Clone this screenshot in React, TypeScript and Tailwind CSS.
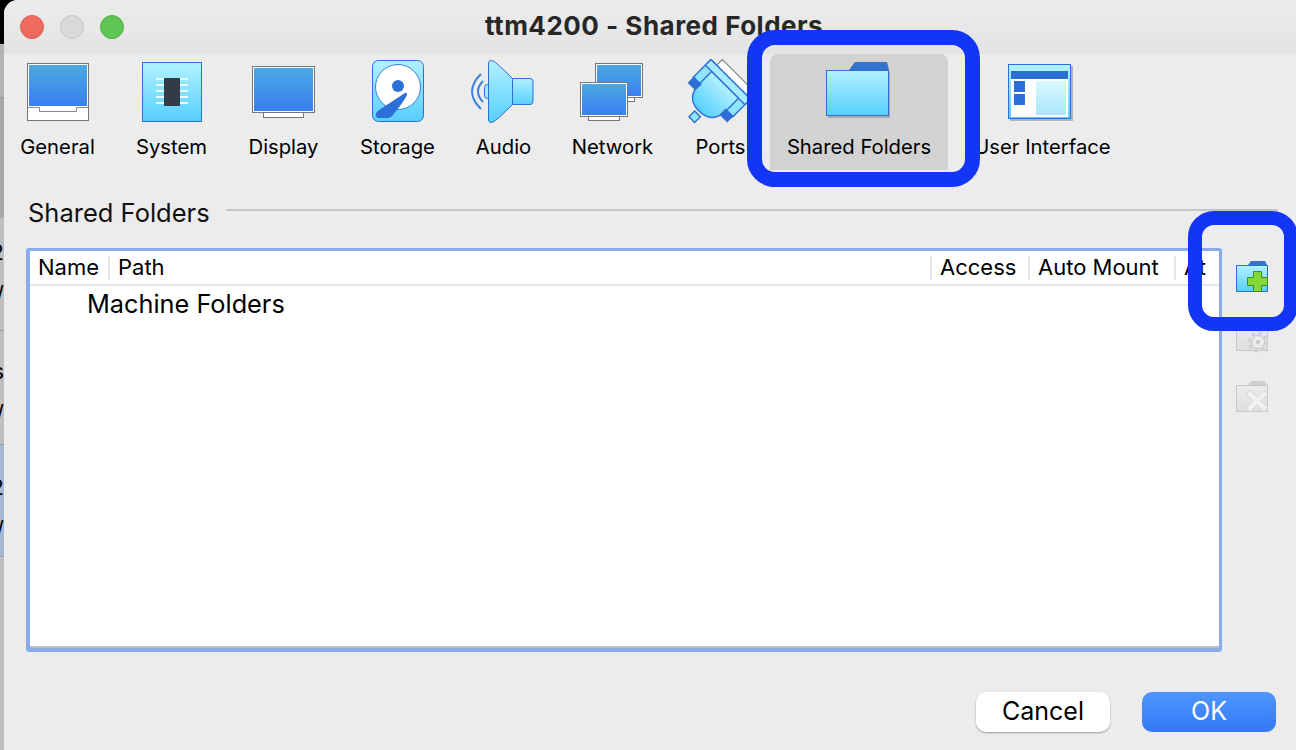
const ink = "#2d6fd6";

function Gradients() {
  return (
    <svg className="absolute w-0 h-0">
      <defs>
        <linearGradient id="lightBlue" x1="0" y1="0" x2="0" y2="1">
          <stop offset="0" stopColor="#b2f1ff" />
          <stop offset="1" stopColor="#56cfff" />
        </linearGradient>
        <linearGradient id="screenBlue" x1="0" y1="0" x2="0" y2="1">
          <stop offset="0" stopColor="#4aa8e0" />
          <stop offset="1" stopColor="#3a7ff5" />
        </linearGradient>
        <linearGradient id="panelBlue" x1="0" y1="0" x2="0" y2="1">
          <stop offset="0" stopColor="#d8f8ff" />
          <stop offset="1" stopColor="#ace6fb" />
        </linearGradient>
        <linearGradient id="grayFolder" x1="0" y1="0" x2="0" y2="1">
          <stop offset="0" stopColor="#ececec" />
          <stop offset="1" stopColor="#dedede" />
        </linearGradient>
      </defs>
    </svg>
  );
}

// icons use page coordinates in their viewBox, easier to check against the screenshot
function Slot({ cx, children }: { cx: number; children: React.ReactNode }) {
  return (
    <svg width="80" height="70" viewBox={`${cx - 40} 56 80 70`} className="overflow-visible shrink-0">
      {children}
    </svg>
  );
}

function GeneralIcon() {
  return (
    <Slot cx={57}>
      <rect x="27.5" y="63.5" width="61" height="57" fill="#fff" stroke="#777" />
      <rect x="29" y="65" width="58" height="41" fill="url(#screenBlue)" />
      <path d="M28 107.5H39.5V111.5H76.5V107.5H88" fill="none" stroke="#8a8a8a" />
    </Slot>
  );
}

function SystemIcon() {
  return (
    <Slot cx={171}>
      <rect x="142.5" y="62.5" width="59" height="59" fill="url(#lightBlue)" stroke={ink} />
      {[79, 85, 91, 97, 103].map((y) => (
        <rect key={y} x="156" y={y - 1} width="32" height="2" fill="#e9fbff" />
      ))}
      <rect x="164" y="78" width="16" height="28" fill="#343a46" />
    </Slot>
  );
}

function DisplayIcon() {
  return (
    <Slot cx={283}>
      <rect x="263.5" y="108.5" width="40" height="9" fill="#fff" stroke="#777" />
      <rect x="252.5" y="66.5" width="62" height="46" fill="#fff" stroke="#777" />
      <rect x="254" y="68" width="59" height="43" fill="url(#screenBlue)" />
    </Slot>
  );
}

function StorageIcon() {
  return (
    <Slot cx={397}>
      <rect x="372.5" y="60.5" width="51" height="61" rx="6" fill="url(#lightBlue)" stroke={ink} />
      <circle cx="398" cy="87" r="22.5" fill="#fff" stroke="#3a7fdc" />
      <circle cx="398" cy="86" r="6" fill={ink} />
      <path d="M405 93Q407 92 407 95Q405 100 393 115Q391 118 388 118H379Q375 118 376 114Q376 112 379 110Z" fill={ink} />
    </Slot>
  );
}

function AudioIcon() {
  return (
    <Slot cx={503}>
      <g fill="none" stroke="#3a80dc" strokeWidth="2">
        <path d="M481 74Q463 91.5 481 109" />
        <path d="M483 81Q473 91.5 483 102" />
      </g>
      <rect x="484.5" y="84.5" width="8" height="14" rx="3" fill="#a4e8ff" stroke={ink} />
      <path
        d="M512.5 78.5H530Q533 78.5 533 81.5V101.5Q533 104.5 530 104.5H512.5Z"
        fill="url(#lightBlue)"
        stroke={ink}
      />
      <path
        d="M488.5 63Q489 59.5 493 61Q496 62 512.5 78.5V104.5Q496 121 493 122Q489 123.5 488.5 120Z"
        fill="url(#lightBlue)"
        stroke={ink}
      />
    </Slot>
  );
}

function Mini({ x, y, w, h, tray }: { x: number; y: number; w: number; h: number; tray: number }) {
  return (
    <g>
      <rect x={x + tray} y={y + h - 4} width={w - tray * 2} height={8} fill="#fff" stroke="#777" />
      <rect x={x} y={y} width={w} height={h} fill="#fff" stroke="#777" />
      <rect x={x + 1.5} y={y + 1.5} width={w - 3} height={h - 3} fill="url(#screenBlue)" />
    </g>
  );
}

function NetworkIcon() {
  return (
    <Slot cx={612}>
      <Mini x={595.5} y={63.5} w={47} h={34} tray={8} />
      <Mini x={580.5} y={82.5} w={47} h={34} tray={8} />
    </Slot>
  );
}

function PortsIcon() {
  return (
    <Slot cx={720}>
      <g transform="translate(718 92) rotate(45)">
        <rect x="-20" y="-26" width="50" height="8" fill="#fff" stroke="#777" />
        <rect x="-28" y="-18" width="12" height="26" rx="1" fill="#8fe4ff" stroke={ink} strokeWidth="1.4" />
        <rect x="16" y="-18" width="12" height="26" rx="1" fill="#8fe4ff" stroke={ink} strokeWidth="1.4" />
        <rect x="-28" y="-18" width="56" height="8" rx="1" fill="#a6ecff" stroke={ink} strokeWidth="1.4" />
        <path d="M-19 -10V6Q-19 27 0 27Q19 27 19 6V-10Z" fill="url(#lightBlue)" stroke={ink} strokeWidth="1.4" />
        <rect x="-28" y="6" width="11" height="9" fill={ink} />
        <rect x="17" y="6" width="11" height="9" fill={ink} />
        <rect x="-3" y="30" width="8" height="8" fill="#8fe4ff" stroke={ink} strokeWidth="1.4" />
      </g>
    </Slot>
  );
}

function FolderIcon() {
  return (
    <Slot cx={859}>
      <rect x="828" y="72" width="62" height="46" fill="#a8a8a8" />
      <path d="M849 70L855 62H887L889 70Z" fill="#3374cf" />
      <rect x="826.5" y="70.5" width="62" height="45" fill="url(#lightBlue)" stroke={ink} />
    </Slot>
  );
}

function InterfaceIcon() {
  return (
    <Slot cx={1042}>
      <rect x="1010" y="66" width="63" height="55" fill="#b4b4b4" />
      <rect x="1008.5" y="64.5" width="62" height="54" fill="url(#lightBlue)" stroke={ink} />
      <rect x="1011" y="71" width="57" height="46" fill="#fff" />
      <rect x="1011" y="71" width="57" height="8" fill={ink} />
      <rect x="1014" y="81" width="11" height="11" fill={ink} />
      <rect x="1014" y="94" width="11" height="11" fill={ink} />
      <rect x="1036" y="81" width="30" height="34" fill="url(#panelBlue)" />
    </Slot>
  );
}

const tabs = [
  { label: "General", width: "w-[106px]", icon: <GeneralIcon /> },
  { label: "System", width: "w-[122px]", icon: <SystemIcon /> },
  { label: "Display", width: "w-[102px]", icon: <DisplayIcon /> },
  { label: "Storage", width: "w-[126px]", icon: <StorageIcon /> },
  { label: "Audio", width: "w-[86px]", icon: <AudioIcon /> },
  { label: "Network", width: "w-[132px]", icon: <NetworkIcon /> },
  { label: "Ports", width: "w-[84px]", icon: <PortsIcon /> },
];

function Tab({ label, width, icon }: { label: string; width: string; icon: React.ReactNode }) {
  return (
    <div className={`${width} flex flex-col items-center pt-[2px] h-[116px] shrink-0`}>
      {icon}
      <div className="mt-[9px] pl-[1px] text-[20.25px] leading-[24px] text-black whitespace-nowrap">{label}</div>
    </div>
  );
}

function AddFolderIcon() {
  return (
    <svg width="40" height="40" viewBox="1232 256 40 40" className="shrink-0">
      <path d="M1248 265L1251 261H1265L1267 265Z" fill="#3374cf" />
      <rect x="1236.5" y="265.5" width="31" height="26" fill="url(#lightBlue)" stroke={ink} />
      <path
        d="M1253.5 271.5H1261.5V277.5H1267.5V285.5H1261.5V291.5H1253.5V285.5H1247.5V277.5H1253.5Z"
        fill="#84d735"
        stroke="#3f8f14"
      />
    </svg>
  );
}

function GearFolderIcon() {
  return (
    <svg width="40" height="40" viewBox="1232 318 40 40" className="shrink-0">
      <rect x="1236.5" y="325.5" width="31" height="25" fill="url(#grayFolder)" stroke="#c9c9c9" />
      <circle cx="1258" cy="342" r="6.5" fill="#ececec" stroke="#c6c6c6" strokeWidth="1" />
      <circle cx="1258" cy="342" r="8.5" fill="none" stroke="#d2d2d2" strokeWidth="3.5" strokeDasharray="3.4 3.27" />
      <circle cx="1258" cy="342" r="2" fill="#c2c2c2" />
    </svg>
  );
}

function DeleteFolderIcon() {
  return (
    <svg width="40" height="40" viewBox="1232 376 40 40" className="shrink-0">
      <path d="M1248 385L1251 381H1265L1267 385Z" fill="#cfcfcf" />
      <rect x="1236.5" y="385.5" width="31" height="26" fill="url(#grayFolder)" stroke="#c9c9c9" />
      <path
        d="M1250 390L1257 397L1264 390L1268 394L1261 401L1268 408L1264 412L1257 405L1250 412L1246 408L1253 401L1246 394Z"
        fill="#f0f0f0"
        stroke="#cecece"
        strokeDasharray="3 1"
      />
    </svg>
  );
}

function StripRow({ height, tone, pad, glyphs }: { height: string; tone: string; pad?: string; glyphs?: string[] }) {
  return (
    <div className={`${height} ${tone} ${pad ?? ""} border-b border-[#9c9c9c] flex flex-col justify-center gap-[20px] overflow-hidden`}>
      {glyphs?.map((g, i) => (
        <div key={i} className="flex justify-end text-[22px] leading-[22px] text-black">
          <span className="shrink-0">{g}</span>
        </div>
      ))}
    </div>
  );
}

function HeaderCell({ width, label, divider = true }: { width: string; label: string; divider?: boolean }) {
  return (
    <div className={`${width} shrink-0 flex items-center h-[24px] pl-[8px] ${divider ? "border-r-2 border-[#e4e4e4]" : ""}`}>
      {label}
    </div>
  );
}

export default function App() {
  return (
    <div className="relative w-[1296px] h-[750px] overflow-hidden flex bg-black font-['Inter','Liberation_Sans',sans-serif]">
      <Gradients />

      <div className="w-[4px] shrink-0 flex flex-col pt-[44px]">
        <StripRow height="h-[54px]" tone="bg-[#b4b4b4]" />
        <div className="h-[120px] bg-[#a8a8a8]" />
        <StripRow height="h-[113px]" tone="bg-[#bfbfbf]" pad="pb-[2px]" glyphs={["2", "/"]} />
        <StripRow height="h-[114px]" tone="bg-[#bfbfbf]" pad="pt-[8px]" glyphs={["s", "/"]} />
        <StripRow height="h-[112px]" tone="bg-[#a6b9d3]" pad="pt-[14px]" glyphs={["2", "/"]} />
        <div className="flex-1 bg-[#bfbfbf]" />
      </div>

      <div className="flex-1 flex flex-col bg-[#ececec] rounded-tl-[14px] overflow-hidden">
        <div className="h-[54px] shrink-0 flex items-center bg-gradient-to-b from-[#ececec] to-[#e3e3e3]">
          <div className="flex gap-[16px] pl-[16px]">
            <div className="w-[24px] h-[24px] rounded-full bg-[#ee6b60] border border-[#dc5a50]" />
            <div className="w-[24px] h-[24px] rounded-full bg-[#d9d9d9] border border-[#c8c8c8]" />
            <div className="w-[24px] h-[24px] rounded-full bg-[#5fc453] border border-[#50b045]" />
          </div>
          <div className="ml-[361px] -mt-[3px] text-[26px] tracking-[0.5px] font-bold text-[#272727] whitespace-nowrap">
            ttm4200 - Shared Folders
          </div>
        </div>

        <div className="h-[142px] shrink-0 flex items-start">
          {tabs.map((t) => (
            <Tab key={t.label} label={t.label} width={t.width} icon={t.icon} />
          ))}
          <div className="ml-[8px] w-[178px] h-[116px] shrink-0 flex flex-col items-center pt-[2px] bg-[#d2d2d2] rounded-t-[8px]">
            <FolderIcon />
            <div className="mt-[9px] text-[20.25px] leading-[24px] text-black whitespace-nowrap">Shared Folders</div>
          </div>
          <Tab label="User Interface" width="w-[188px]" icon={<InterfaceIcon />} />
        </div>

        <div className="h-[34px] shrink-0 flex items-center pl-[24px] pr-[18px] gap-[16px]">
          <div className="text-[25.5px] leading-[34px] text-[#111] whitespace-nowrap">Shared Folders</div>
          <div className="flex-1 h-[2px] bg-[#c6c6c6] -mt-[6px]" />
        </div>

        <div className="mt-[18px] h-[404px] shrink-0 flex pl-[22px]">
          <div className="w-[1196px] h-full border-[4px] border-t-[3px] border-r-[3px] border-[#8aaae8] rounded-[3px] bg-white flex flex-col">
            <div className="h-[35px] shrink-0 flex items-center border-b-2 border-[#e6e6e6] text-[22px] text-black overflow-hidden">
              <HeaderCell width="w-[80px]" label="Name" />
              <HeaderCell width="w-[822px]" label="Path" />
              <HeaderCell width="w-[98px]" label="Access" />
              <HeaderCell width="w-[146px]" label="Auto Mount" />
              <HeaderCell width="w-[40px]" label="At" divider={false} />
            </div>
            <div className="flex-1 pl-[57px] pt-[1px] text-[25.3px] leading-[34px] text-black border-b-2 border-[#bcbcbc]">
              Machine Folders
            </div>
          </div>

          <div className="ml-[10px] flex flex-col pt-[8px]">
            <AddFolderIcon />
            <div className="mt-[22px]">
              <GearFolderIcon />
            </div>
            <div className="mt-[18px]">
              <DeleteFolderIcon />
            </div>
          </div>
        </div>

        <div className="mt-[40px] flex justify-end gap-[32px] pr-[20px]">
          <button className="w-[134px] h-[40px] rounded-[10px] bg-white text-[25px] text-black shadow-[0_1px_2px_rgba(0,0,0,0.35)]">
            Cancel
          </button>
          <button className="w-[134px] h-[40px] rounded-[10px] bg-gradient-to-b from-[#4f95fb] to-[#3478f6] text-[25px] text-white">
            OK
          </button>
        </div>
      </div>

      {/* blue annotation boxes drawn over the screenshot */}
      <div className="absolute left-[747px] top-[30px] w-[233px] h-[157px] border-[15px] border-[#1235f6] rounded-[28px]" />
      <div className="absolute left-[1188px] top-[211px] w-[110px] h-[120px] border-[14px] border-[#1235f6] rounded-[26px]" />
    </div>
  );
}
